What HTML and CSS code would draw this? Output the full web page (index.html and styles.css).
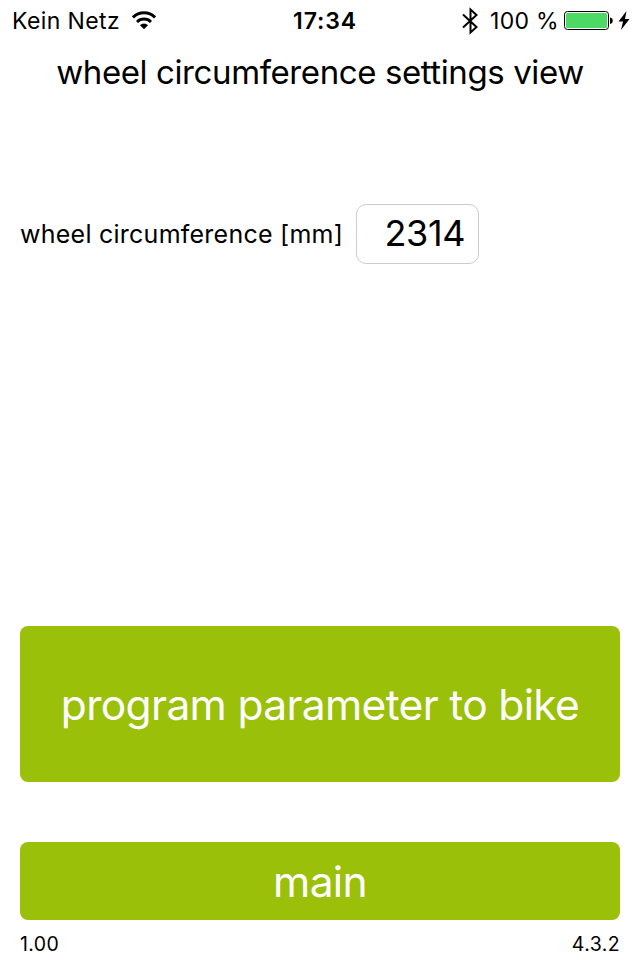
FILE: index.html
```html
<!DOCTYPE html>
<html lang="en">
<head>
    <meta charset="UTF-8">
    <meta name="viewport" content="width=device-width, initial-scale=1.0">
    <title>wheel circumference settings</title>
    <link rel="stylesheet" href="styles.css">
</head>
<body>
    <div class="wrap">
        <div class="statusBar">
            <div class="network">
                <span class="carrier">Kein Netz</span>
                <svg class="wifi" width="24" height="20" viewBox="0 0 24 20">
                    <path d="M1 6.400a15.500 15.500 0 0 1 22 0" fill="none" stroke="#000" stroke-width="3"/>
                    <path d="M5 10.900a9.900 9.900 0 0 1 14 0" fill="none" stroke="#000" stroke-width="2.800"/>
                    <path d="M8 14.200a5.700 5.700 0 0 1 8 0L12 18.200z"/>
                </svg>
            </div>
            <span class="time">17:34</span>
            <div class="power">
                <svg class="bluetooth" width="17" height="28" viewBox="0 0 17 28">
                    <path d="M1 7.500l13.500 12.500-6 5.500V2.500l6 5.500L1 20.500" fill="none" stroke="#000" stroke-width="2"/>
                </svg>
                <span class="percent">100 %</span>
                <svg class="battery" width="50" height="20" viewBox="0 0 50 20">
                    <rect x="0.500" y="0.500" width="44" height="18" rx="3" fill="#fff" stroke="#000"/>
                    <rect x="2" y="2" width="41" height="15" rx="1.500" fill="#4cd964"/>
                    <path d="M46 6.500a3.300 3.300 0 0 1 0 6.500z"/>
                </svg>
                <svg class="bolt" width="12" height="20" viewBox="0 0 12 20">
                    <path d="M8.500 0L0.500 10.500h4.500L3 19 11.500 8H7z"/>
                </svg>
            </div>
        </div>

        <h1>wheel circumference settings view</h1>

        <form>
            <div class="setting">
                <label for="circumference">wheel circumference [mm]</label>
                <input type="text" id="circumference" value="2314">
            </div>
            <button type="button" class="program">program parameter to bike</button>
            <button type="button" class="main">main</button>
        </form>

        <div class="version">
            <span class="app">1.00</span>
            <span class="firmware">4.3.2</span>
        </div>
    </div>
</body>
</html>
```
FILE: styles.css
```css
*{
    box-sizing: border-box;
}
body{
    margin: 0;
    background: #fff;
    color: #000;
    font-family: Inter, "Liberation Sans", sans-serif;
}
.wrap{
    height: 960px;
    overflow: hidden;
}
/* status bar */
.statusBar{
    height: 41px;
    padding: 1px 10px 0 12px;
    display: grid;
    grid-template-columns: 1fr auto 1fr;
    align-items: center;
    font-size: 23px;
    line-height: 40px;
    white-space: nowrap;
}
.network, .power{
    display: flex;
    align-items: center;
}
.carrier{
    letter-spacing: 0.4px;
}
.power{
    justify-content: flex-end;
}
.wifi{
    margin-left: 12px;
}
.time{
    padding-left: 8px;
    font-weight: 600;
    letter-spacing: 0.9px;
}
.percent{
    margin: 0 5px 0 11px;
    letter-spacing: 0.3px;
}
.bolt{
    margin-left: 4px;
}
h1{
    height: 64px;
    margin: 0;
    text-align: center;
    font-size: 33px;
    font-weight: 400;
    letter-spacing: -0.4px;
    line-height: 63px;
    white-space: nowrap;
}
form{
    padding: 99px 20px 0;
}
.setting{
    height: 60px;
    display: flex;
    align-items: center;
}
label{
    width: 336px;
    font-size: 25px;
    letter-spacing: 0.25px;
    white-space: nowrap;
}
input{
    width: 123px;
    height: 60px;
    padding: 0 13px 2px;
    border: 1px solid #ccc;
    border-radius: 10px;
    font-family: inherit;
    font-size: 36px;
    letter-spacing: -0.4px;
    text-align: right;
}
/* buttons */
button{
    display: block;
    width: 100%;
    padding: 0;
    border: none;
    border-radius: 8px;
    background: #9bc009;
    color: #fff;
    font-family: inherit;
    font-size: 42.5px;
    font-weight: 400;
    letter-spacing: -0.65px;
}
.program{
    height: 156px;
    margin-top: 362px;
}
.main{
    height: 78px;
    margin-top: 60px;
}
.version{
    height: 40px;
    padding: 4px 20px 0;
    display: flex;
    justify-content: space-between;
    font-size: 19.5px;
    letter-spacing: 0.4px;
    line-height: 40px;
}
```
